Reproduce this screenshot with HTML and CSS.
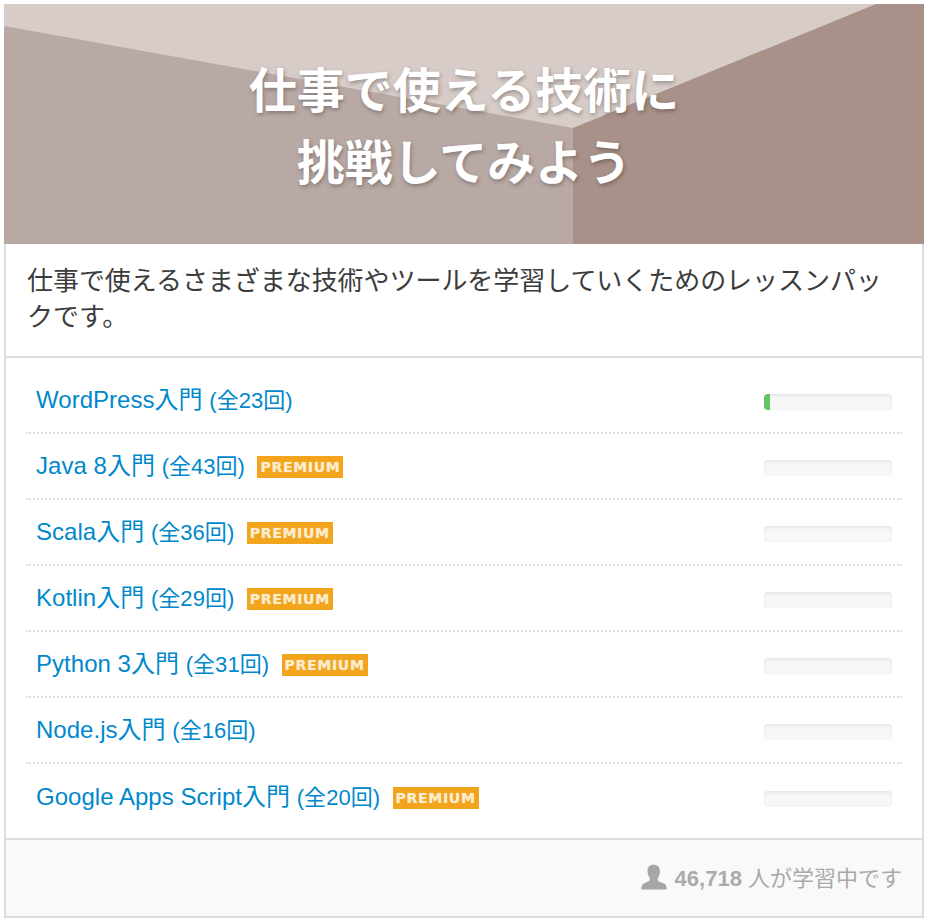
FILE: index.html
```html
<!DOCTYPE html>
<html lang="ja">
<head>
<meta charset="utf-8">
<title>仕事で使える技術に挑戦してみよう</title>
<link rel="stylesheet" href="styles.css">
</head>
<body>
<article class="card">
  <header class="hero">
    <svg class="hero-bg" viewBox="0 0 920 240" preserveAspectRatio="none" aria-hidden="true">
      <rect width="920" height="240" fill="#d7ccc8"/>
      <polygon points="0,22 569,124 569,240 0,240" fill="#b9a9a5"/>
      <polygon points="569,124 872,0 920,0 920,240 569,240" fill="#a89188"/>
    </svg>
    <h1 class="hero-title">仕事で使える技術に<br>挑戦してみよう</h1>
  </header>
  <div class="card-body">
    <p class="desc">仕事で使えるさまざまな技術やツールを学習していくためのレッスンパックです。</p>
    <ul class="lessons">
      <li class="lesson"><a class="lesson-link" href="#">WordPress入門 <small>(全23回)</small></a><div class="bar"><div class="bar-fill" style="width:6px"></div></div></li>
      <li class="lesson"><a class="lesson-link" href="#">Java 8入門 <small>(全43回)</small></a><span class="badge">PREMIUM</span><div class="bar"></div></li>
      <li class="lesson"><a class="lesson-link" href="#">Scala入門 <small>(全36回)</small></a><span class="badge">PREMIUM</span><div class="bar"></div></li>
      <li class="lesson"><a class="lesson-link" href="#">Kotlin入門 <small>(全29回)</small></a><span class="badge">PREMIUM</span><div class="bar"></div></li>
      <li class="lesson"><a class="lesson-link" href="#">Python 3入門 <small>(全31回)</small></a><span class="badge">PREMIUM</span><div class="bar"></div></li>
      <li class="lesson"><a class="lesson-link" href="#">Node.js入門 <small>(全16回)</small></a><div class="bar"></div></li>
      <li class="lesson"><a class="lesson-link" href="#">Google Apps Script入門 <small>(全20回)</small></a><span class="badge">PREMIUM</span><div class="bar"></div></li>
    </ul>
    <footer class="card-foot">
      <svg class="user-icon" viewBox="0 0 26 26" aria-hidden="true"><path d="M13 0.500c-4.500 0-6.500 2.800-6.500 6.500 0 2.600.8 4.800 1.900 6.300.6.900.7 1.900.3 2.800-.4 1-1.600 1.600-3.700 2.300C2.400 19.500.9 20.700.6 22.400L.3 25.500h25.400l-.3-3.100c-.3-1.700-1.800-2.900-4.900-3.800-2.100-.7-3.300-1.300-3.700-2.300-.4-.9-.3-1.900.3-2.800 1.100-1.500 1.900-3.700 1.900-6.300 0-3.700-2-6.500-6.500-6.500z" fill="#a6a6a6"/></svg>
      <span class="foot-text"><b>46,718</b> 人が学習中です</span>
    </footer>
  </div>
</article>
</body>
</html>
```
FILE: styles.css
```css
* { box-sizing: border-box; }
html, body { margin: 0; padding: 0; background: #fff; }
body {
  padding: 4px 6px 6px 4px;
  font-family: "Liberation Sans", "Noto Sans CJK JP", sans-serif;
  color: #333;
}
.card { width: 920px; }
.hero {
  position: relative;
  height: 240px;
  padding-top: 52px;
  text-align: center;
}
.hero-bg { position: absolute; inset: 0; width: 100%; height: 100%; display: block; }
.hero-title {
  position: relative;
  margin: 0;
  font-size: 48px;
  line-height: 72px;
  font-weight: 700;
  color: #fff;
  text-shadow: 1px 2px 4px rgba(0, 0, 0, 0.3);
}
.card-body {
  border: 2px solid #ddd;
  border-top: 0;
}
.desc {
  margin: 0;
  padding: 19px 20px 21px 21px;
  font-size: 26px;
  line-height: 36px;
  letter-spacing: -0.05px;
  color: #3c3c3c;
  border-bottom: 2px solid #ddd;
}
.lessons {
  list-style: none;
  margin: 0;
  padding: 10px 20px 8px;
  border-bottom: 2px solid #ddd;
}
.lesson {
  display: flex;
  align-items: center;
  height: 66px;
  padding: 0 10px;
  border-bottom: 2px dotted #ddd;
}
.lesson:last-child { border-bottom: 0; }
.lesson-link {
  margin-bottom: 6px;
  font-size: 24px;
  letter-spacing: 0.03px;
  color: #0088cc;
  text-decoration: none;
  white-space: nowrap;
}
.lesson-link small { font-size: 22px; }
.badge {
  margin-left: 12.500px;
  margin-top: 2px;
  width: 86px;
  height: 22px;
  background: #f2a41d;
  color: #fdeccb;
  font: 700 14px/22px "DejaVu Sans", sans-serif;
  letter-spacing: 0.7px;
  text-align: center;
  text-shadow: 0 0 1px rgba(255, 240, 210, 0.7);
  white-space: nowrap;
}
.bar {
  margin-left: auto;
  margin-top: 4px;
  width: 128px;
  height: 16px;
  border-radius: 4px;
  background: #f7f7f7;
  box-shadow: inset 0 2px 3px rgba(0, 0, 0, 0.06), inset 0 0 2px rgba(0, 0, 0, 0.06);
  overflow: hidden;
}
.bar-fill { height: 100%; background: #62c462; }
.card-foot {
  display: flex;
  align-items: center;
  justify-content: flex-end;
  height: 76px;
  padding: 0 20px 2px;
  background: #f9f9f9;
  color: #aaa;
  font-size: 22px;
}
.user-icon { width: 26px; height: 26px; margin-right: 8px; }
.foot-text { margin-bottom: 2px; }
.foot-text b { font-weight: 700; }
```
